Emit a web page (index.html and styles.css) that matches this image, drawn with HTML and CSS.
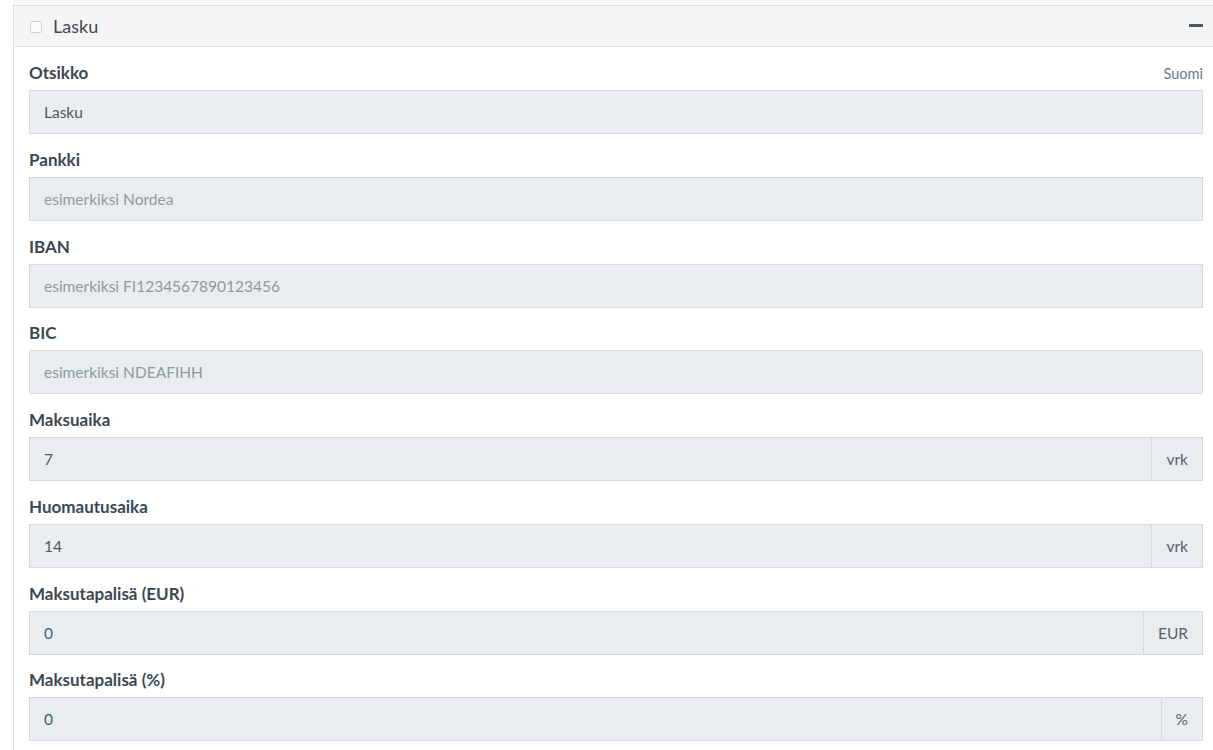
FILE: index.html
```html
<!DOCTYPE html>
<html lang="fi">
<head>
<meta charset="utf-8">
<title>Lasku</title>
<link rel="stylesheet" href="styles.css">
</head>
<body>
<div class="page">
  <div class="prev-panel"></div>
  <section class="panel">
    <header class="panel-heading">
      <span class="check"></span>
      <span class="panel-title">Lasku</span>
      <span class="collapse"></span>
    </header>
    <div class="panel-body">
      <div class="field">
        <div class="label-row"><label class="label">Otsikko</label><span class="lang">Suomi</span></div>
        <div class="input"><span class="value">Lasku</span></div>
      </div>
      <div class="field">
        <div class="label-row"><label class="label">Pankki</label></div>
        <div class="input"><span class="placeholder">esimerkiksi Nordea</span></div>
      </div>
      <div class="field">
        <div class="label-row"><label class="label">IBAN</label></div>
        <div class="input"><span class="placeholder">esimerkiksi FI1234567890123456</span></div>
      </div>
      <div class="field">
        <div class="label-row"><label class="label">BIC</label></div>
        <div class="input"><span class="placeholder">esimerkiksi NDEAFIHH</span></div>
      </div>
      <div class="field">
        <div class="label-row"><label class="label">Maksuaika</label></div>
        <div class="input-group">
          <div class="input grow"><span class="value">7</span></div>
          <div class="addon">vrk</div>
        </div>
      </div>
      <div class="field">
        <div class="label-row"><label class="label">Huomautusaika</label></div>
        <div class="input-group">
          <div class="input grow"><span class="value">14</span></div>
          <div class="addon">vrk</div>
        </div>
      </div>
      <div class="field">
        <div class="label-row"><label class="label">Maksutapalisä (EUR)</label></div>
        <div class="input-group">
          <div class="input grow"><span class="value num">0</span></div>
          <div class="addon">EUR</div>
        </div>
      </div>
      <div class="field">
        <div class="label-row"><label class="label">Maksutapalisä (%)</label></div>
        <div class="input-group">
          <div class="input grow"><span class="value num">0</span></div>
          <div class="addon">%</div>
        </div>
      </div>
    </div>
  </section>
</div>
</body>
</html>
```
FILE: styles.css
```css
html, body {
  margin: 0;
  padding: 0;
  overflow: hidden;
  background: #ffffff;
}
body {
  font-family: Lato, "Open Sans", sans-serif;
  color: #3d4a54;
}
.page {
  padding-left: 13px;
  width: 1220px;
}
.prev-panel {
  height: 5px;
  background: #f9f9f9;
}
.panel {
  border: 1px solid #dddddd;
  border-right: 0;
  background: #ffffff;
  width: 1204px;
}
.panel-heading {
  display: flex;
  align-items: center;
  height: 40px;
  background: #f5f5f5;
  border-bottom: 1px solid #dddddd;
  padding: 0 15px 0 16px;
  box-sizing: content-box;
}
.check {
  width: 10px;
  height: 10px;
  border: 1px solid #cfcfcf;
  border-radius: 2px;
  background: #fbfbfb;
  margin-right: 11px;
  margin-top: 1px;
}
.panel-title {
  flex: 1;
  font-size: 18px;
  color: #3f4c56;
  line-height: 20px;
}
.collapse {
  width: 14px;
  height: 3px;
  background: #4a5865;
  margin-top: -1px;
}
.panel-body {
  padding: 15px 15px 0 15px;
}
.field {
  margin-bottom: 14.75px;
}
.label-row {
  display: flex;
  justify-content: space-between;
  align-items: baseline;
  height: 22px;
  margin-bottom: 6px;
}
.label {
  font-weight: bold;
  font-size: 17px;
  line-height: 22px;
  color: #3b4852;
}
.lang {
  font-size: 14.5px;
  color: #607c8c;
}
.input {
  display: flex;
  align-items: center;
  height: 42px;
  background: #e9edf0;
  border: 1px solid #d3dadd;
  padding: 0 14px;
  font-size: 15.5px;
}
.input-group {
  display: flex;
}
.grow {
  flex: 1;
}
.value {
  color: #4f575d;
}
.value.num {
  color: #3f5f78;
}
.placeholder {
  color: #8e9aa1;
}
.addon {
  display: flex;
  align-items: center;
  justify-content: center;
  height: 42px;
  padding: 0 14px;
  background: #e9edf0;
  border: 1px solid #d3dadd;
  border-left: 0;
  font-size: 15.5px;
  color: #56606a;
}
```
